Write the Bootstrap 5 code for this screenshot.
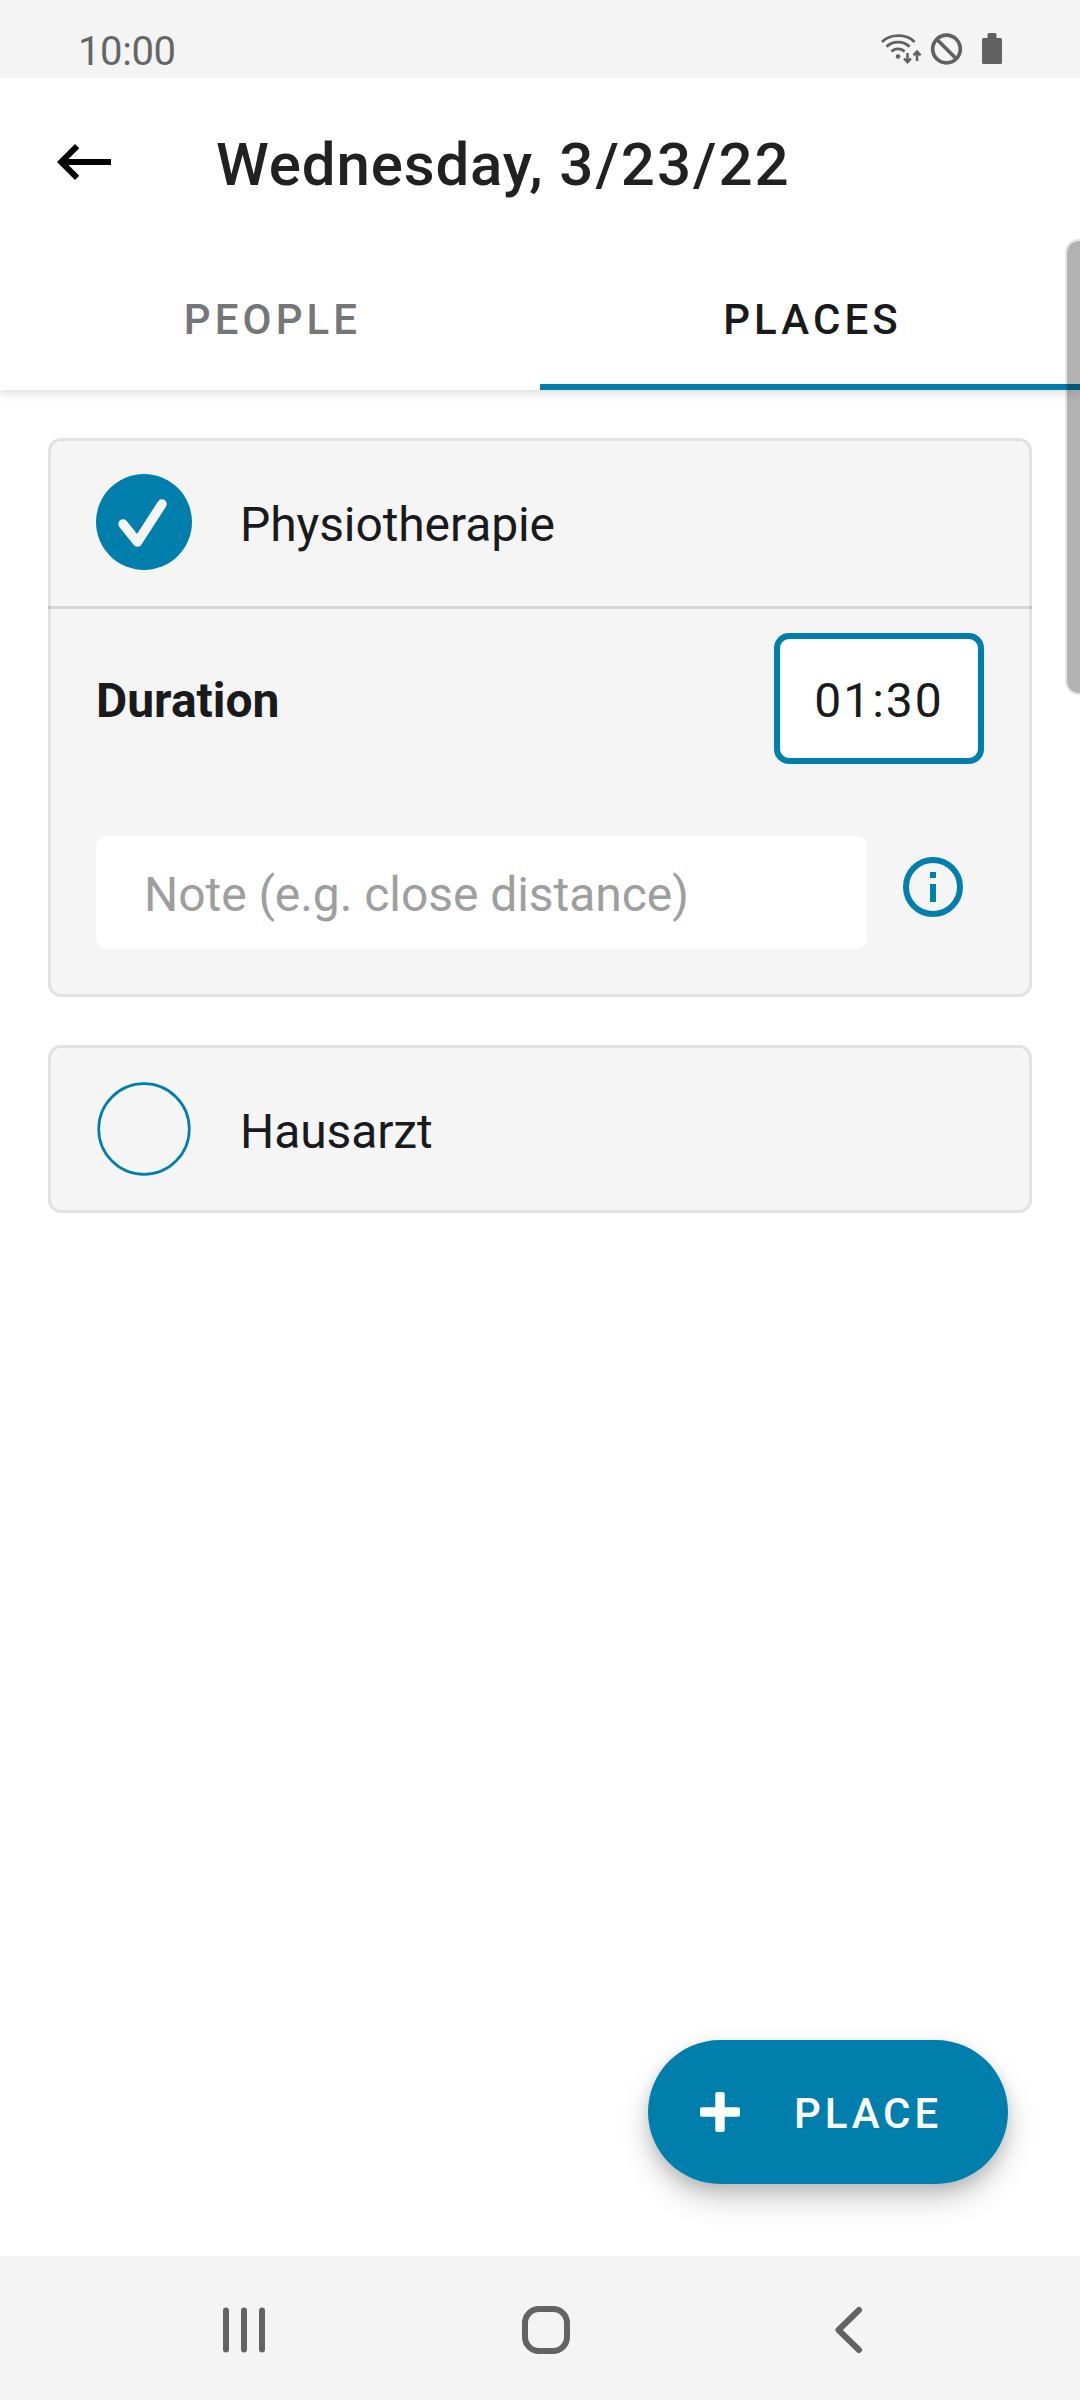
<!DOCTYPE html>
<html lang="en">
<head>
<meta charset="utf-8">
<meta name="viewport" content="width=device-width, initial-scale=1">
<title>Wednesday, 3/23/22</title>
<link href="https://cdn.jsdelivr.net/npm/bootstrap@5.3.0/dist/css/bootstrap.min.css" rel="stylesheet">
<style>
  :root { --accent: #007fad; --ink: #191a1b; --surface: #f5f5f5; --bar: #f4f4f4; --line: #e2e2e2; }
  body { font-family: Roboto, sans-serif; color: var(--ink); background: #fff; height: 2400px; overflow: hidden; }
  svg { display: block; flex: none; }
  .status-bar { height: 78px; background: var(--bar); color: #666; padding: 0 76px 0 78px; z-index: 2; }
  .clock { font-size: 40px; line-height: 48px; margin-top: 28px; letter-spacing: -.4px; }
  .app-head { height: 312px; box-shadow: 0 3px 10px rgba(0,0,0,.15); z-index: 1; }
  .app-title-row { height: 168px; padding-left: 48px; }
  .app-title { font-size: 60px; line-height: 72px; font-weight: 500; letter-spacing: .85px; color: #212121; margin: 5px 0 0 96px; }
  .app-title .date-num { letter-spacing: 2px; }
  .tab-link { height: 144px; padding: 0; border-radius: 0; font-size: 42px; font-weight: 500; letter-spacing: 4.1px; color: #757677; border: 0; border-bottom: 6px solid transparent; }
  .tab-link:hover { color: #757677; }
  .tab-link.active { color: var(--ink); border-bottom-color: var(--accent); }
  .tab-link span { padding: 8px 0 0 5px; }
  .places { padding: 48px; gap: 48px; }
  .place-card { background: var(--surface); border: 3px solid var(--line); border-radius: 13px; }
  .place-head { height: 162px; padding: 0 45px; gap: 48px; }
  .txt { font-size: 48px; line-height: 56px; }
  .place-name { padding-top: 6px; letter-spacing: -.1px; }
  .rule { height: 3px; margin: 3px -3px 0; background: rgba(0,0,0,.12); }
  .place-body { padding: 24px 45px 45px; }
  .duration { height: 131px; }
  .time-btn { width: 210px; height: 131px; border: 6px solid var(--accent); border-radius: 15px; background: #fff; color: var(--ink); padding: 5px 0 0; letter-spacing: 2px; }
  .time-btn:hover { background: #fff; }
  .note-row { margin-top: 72px; gap: 36px; }
  .note-input { width: 771px; height: 113px; border: 0; border-radius: 12px; padding: 4px 48px 0; font-size: 48px; letter-spacing: -.05px; color: var(--ink); background: #fff; }
  .note-input::placeholder { color: #9e9e9e; opacity: 1; }
  .fab { width: 360px; height: 144px; border: 0; border-radius: 72px; background: var(--accent); color: #fff; padding: 0 0 0 52px; font-size: 42px; font-weight: 500; letter-spacing: 3.9px; box-shadow: 0 15px 30px rgba(0,0,0,.2), 0 6px 14px rgba(0,0,0,.12); }
  .fab span { margin-left: 54px; padding-top: 2px; }
  .fab-row { padding: 0 72px 72px; }
  .sys-nav { height: 144px; background: var(--bar); }
  .scroll-thumb { right: 0; top: 239px; width: 15px; height: 456px; border-radius: 14px 0 0 14px; background: rgba(0,0,0,.3); background-clip: padding-box; border: 2px solid rgba(0,0,0,.1); border-right: 0; z-index: 3; }
</style>
</head>
<body class="position-relative d-flex flex-column">
  <header class="status-bar position-relative d-flex justify-content-between flex-shrink-0">
    <div class="clock">10:00</div>
    <svg width="124" height="78" viewBox="880 0 124 78" fill="none" stroke="#616161">
      <path d="M882 42C890 33.500 907 33.500 914.500 42M886.500 46.700C892.500 40.500 903.500 40.500 909.500 46.700M891.500 51.500C895 48 901 48 904.500 51.500" stroke-width="2.800"/>
      <circle cx="898" cy="56.500" r="2.300" fill="#616161" stroke="none"/>
      <path d="M907.500 53v8.500M904 58.500l3.500 3.700 3.500-3.700M917 61v-8.500M913.500 55.300l3.500-3.700 3.500 3.700" stroke-width="2.500"/>
      <circle cx="946.500" cy="49" r="13.800" stroke-width="3.700"/>
      <path d="M936.700 39.200l19.600 19.600" stroke-width="3.700"/>
      <path d="M987.500 38v-3.500a1.500 1.500 0 0 1 1.500-1.500h6a1.500 1.500 0 0 1 1.500 1.500V38h4a1.500 1.500 0 0 1 1.500 1.500v23a1.500 1.500 0 0 1-1.500 1.500h-17a1.500 1.500 0 0 1-1.500-1.500v-23a1.500 1.500 0 0 1 1.500-1.500z" fill="#616161" stroke="none"/>
    </svg>
  </header>

  <div class="app-head position-relative bg-white flex-shrink-0">
    <div class="app-title-row d-flex align-items-center">
      <svg width="72" height="72" viewBox="0 0 24 24" fill="#000"><path d="M21 11H6.830l3.580-3.590L9 6l-6 6 6 6 1.410-1.410L6.830 13H21z"/></svg>
      <h1 class="app-title">Wednesday, <span class="date-num">3/23/22</span></h1>
    </div>
    <nav class="nav nav-fill">
      <a class="nav-link tab-link w-50 d-flex align-items-center justify-content-center" href="#"><span>PEOPLE</span></a>
      <a class="nav-link tab-link active w-50 d-flex align-items-center justify-content-center" href="#"><span>PLACES</span></a>
    </nav>
  </div>

  <main class="places d-flex flex-column flex-grow-1">
    <section class="place-card">
      <div class="place-head d-flex align-items-center">
        <svg width="96" height="96" viewBox="0 0 96 96" fill="none"><circle cx="48" cy="48" r="48" fill="#007fad"/><path d="M27 50l14.500 18L66 30" stroke="#f5f5f5" stroke-width="9.500" stroke-linecap="round" stroke-linejoin="round"/></svg>
        <div class="txt place-name">Physiotherapie</div>
      </div>
      <div class="rule"></div>
      <div class="place-body">
        <div class="duration d-flex align-items-center justify-content-between">
          <div class="txt fw-bold pt-1">Duration</div>
          <button class="btn time-btn txt" type="button">01:30</button>
        </div>
        <div class="note-row d-flex">
          <input class="form-control note-input" type="text" placeholder="Note (e.g. close distance)">
          <svg class="mt-3" width="60" height="72" viewBox="903 852 60 72" fill="none"><circle cx="933" cy="887" r="27" stroke="#007fad" stroke-width="6"/><path d="M930 872h6v6h-6zM930 884h6v18h-6z" fill="#007fad"/></svg>
        </div>
      </div>
    </section>
    <section class="place-card">
      <div class="place-head d-flex align-items-center">
        <svg width="96" height="96" viewBox="0 0 96 96" fill="none"><circle cx="48" cy="48" r="45.300" stroke="#007fad" stroke-width="2.700"/></svg>
        <div class="txt place-name">Hausarzt</div>
      </div>
    </section>
  </main>

  <div class="fab-row d-flex justify-content-end flex-shrink-0">
    <button class="btn fab d-flex align-items-center" type="button">
      <svg width="40" height="40" viewBox="0 0 40 40" fill="#fff"><rect x="15.300" width="9.400" height="40" rx="2"/><rect y="15.300" width="40" height="9.400" rx="2"/></svg>
      <span>PLACE</span>
    </button>
  </div>

  <footer class="sys-nav flex-shrink-0">
    <svg width="1080" height="144" viewBox="0 2256 1080 144" fill="none" stroke="#636363" stroke-width="6" stroke-linecap="round" stroke-linejoin="round">
      <path d="M226 2310.500v39M244 2310.500v39M262 2310.500v39M859 2310L838.500 2330l20.500 20"/>
      <rect x="525" y="2309" width="42" height="42" rx="14"/>
    </svg>
  </footer>

  <div class="scroll-thumb position-absolute"></div>
<script src="https://cdn.jsdelivr.net/npm/bootstrap@5.3.0/dist/js/bootstrap.bundle.min.js"></script>
</body>
</html>
